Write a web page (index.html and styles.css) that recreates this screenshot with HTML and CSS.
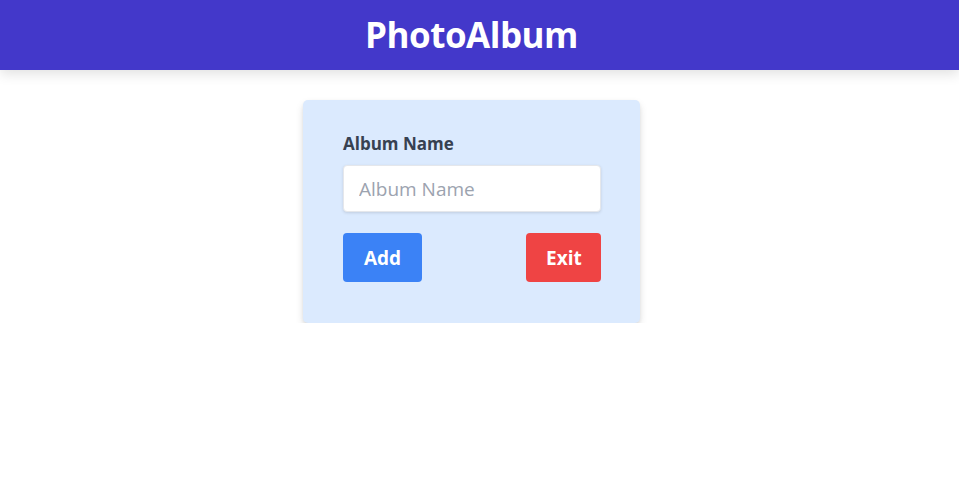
FILE: index.html
```html
<!DOCTYPE html>
<html>
<head>
<meta charset="utf-8">
<link rel="stylesheet" href="styles.css">
</head>
<body>
<header class="topbar">
  <h1 class="brand">PhotoAlbum</h1>
</header>
<main class="main">
  <form class="card">
    <label class="label" for="album">Album Name</label>
    <input class="input" id="album" type="text" placeholder="Album Name">
    <div class="actions">
      <button type="button" class="btn btn-add">Add</button>
      <button type="button" class="btn btn-exit">Exit</button>
    </div>
  </form>
</main>
</body>
</html>
```
FILE: styles.css
```css
* { box-sizing: border-box; }
html, body { margin: 0; padding: 0; }
body {
  font-family: "Open Sans", "Noto Sans", "Liberation Sans", sans-serif;
  background: #ffffff;
  color: #374151;
}
.topbar {
  height: 70px;
  background: #4338ca;
  box-shadow: 0 4px 12px rgba(0,0,0,0.12);
  display: flex;
  align-items: center;
  justify-content: center;
  padding-right: 16px;
  position: relative;
}
.brand {
  margin: 0 0 2px;
  color: #ffffff;
  font-size: 35px;
  font-weight: 700;
  letter-spacing: -0.5px;
  line-height: 1;
}
.main {
  display: flex;
  justify-content: center;
  padding: 30px 16px 0 0;
}
.card {
  width: 337px;
  background: #dbeafe;
  border-radius: 5px;
  box-shadow: 0 4px 8px -1px rgba(0,0,0,0.16), 0 2px 4px -1px rgba(0,0,0,0.08);
  padding: 32px 39px 41px 40px;
  display: flex;
  flex-direction: column;
}
.label {
  font-size: 17px;
  font-weight: 700;
  color: #374151;
  line-height: 24px;
  margin-bottom: 9px;
}
.input {
  height: 47px;
  width: 258px;
  border: 1px solid #e5e7eb;
  border-radius: 4px;
  background: #fff;
  padding: 0 15px;
  font-family: inherit;
  font-size: 19px;
  color: #374151;
  box-shadow: 0 1px 3px rgba(0,0,0,0.12);
}
.input::placeholder { color: #9ca3af; }
.actions {
  margin-top: 21px;
  display: flex;
  justify-content: space-between;
}
.btn {
  height: 49px;
  border: none;
  border-radius: 4px;
  color: #fff;
  font-family: inherit;
  font-size: 19px;
  font-weight: 700;
  padding: 0 20px;
  cursor: pointer;
}
.btn-add { background: #3b82f6; width: 79px; }
.btn-exit { background: #ef4444; width: 75px; }
```
